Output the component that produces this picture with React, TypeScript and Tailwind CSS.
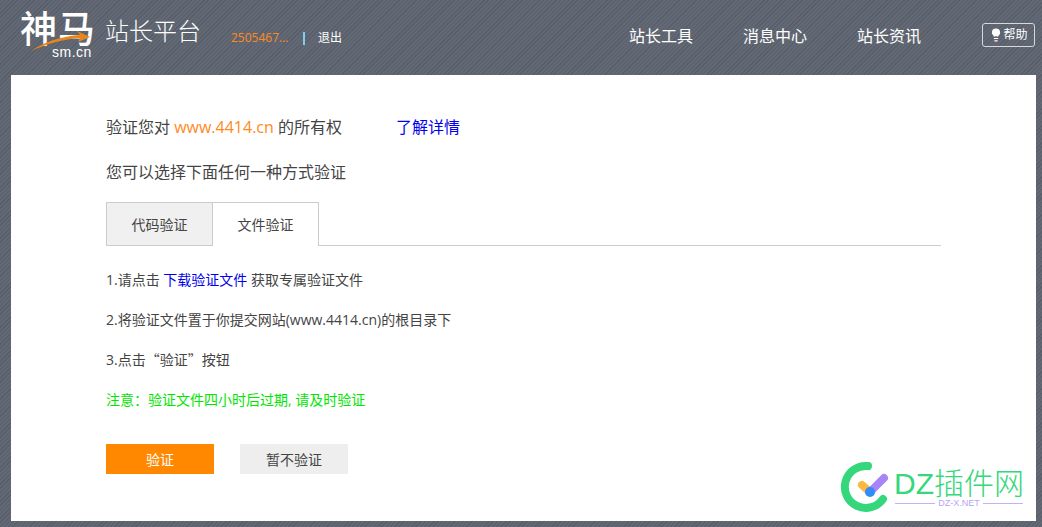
import React from "react";
import { Lightbulb } from "lucide-react";

const cjk = "font-['Open_Sans','Noto_Sans_CJK_SC',sans-serif]";

const Logo = () => (
  <div className="relative w-[85px] h-[62px] ml-[20px] shrink-0 text-white">
    <div className="absolute left-0 top-[9px] text-[37px] leading-[37px] tracking-[1px] font-medium font-['Noto_Sans_CJK_SC',sans-serif] whitespace-nowrap">
      神马
    </div>
    <svg className="absolute left-[10px] top-[28px]" width="62" height="26" viewBox="0 0 62 26">
      <path d="M1 23 C14 14 32 8 50 7 L47 3 L60 9 L48 14 L50 10 C34 11 16 16 1 23 Z" fill="#e8861c" />
    </svg>
    <div className="absolute left-[32px] top-[46px] text-[14px] leading-[12px] font-['Liberation_Sans',sans-serif] tracking-[0.5px]">
      sm.cn
    </div>
  </div>
);

const Watermark = () => (
  <div className="absolute left-[840px] top-[460px] w-[190px] h-[54px]">
    <svg className="absolute left-0 top-0" width="52" height="54" viewBox="0 0 52 54">
      <path d="M28 6 A21 21 0 1 0 43 39" fill="none" stroke="#34d77b" strokeWidth="8" strokeLinecap="round" />
      <path d="M22 25 L30 32" stroke="#fdb93f" strokeWidth="8" strokeLinecap="round" />
      <path d="M30 32 L44 18" stroke="#a585f8" strokeWidth="8" strokeLinecap="round" />
      <circle cx="30" cy="32" r="5" fill="#2e8df7" />
    </svg>
    <div className="absolute left-[54px] top-[6px] text-[30px] leading-[36px] text-[#34d77b] whitespace-nowrap font-['Liberation_Sans','Noto_Sans_CJK_SC',sans-serif] font-light">
      DZ插件网
    </div>
    <div className="absolute left-[55px] top-[37px] w-[128px] flex items-center gap-[3px] text-[9px] leading-[12px] text-[#b9a5f5] font-['Liberation_Sans',sans-serif]">
      <span className="flex-1 h-px bg-[#c3b2f5]" />
      <span>DZ-X.NET</span>
      <span className="flex-1 h-px bg-[#c3b2f5]" />
    </div>
  </div>
);

export default function App() {
  return (
    <div className={`relative w-[1042px] h-[527px] overflow-hidden ${cjk} bg-[repeating-linear-gradient(135deg,#585f6a_0px,#585f6a_1px,#626974_1px,#626974_3px)]`}>
      <header className="h-[75px] flex items-start">
        <Logo />
        <div className="mt-[16px] text-[24px] leading-[30px] font-light text-white whitespace-nowrap">站长平台</div>
        <div className="ml-[30px] mt-[31px] flex items-center text-[12px] leading-[14px]">
          <span className="text-[#ff8a1e] w-[59px] whitespace-nowrap">2505467...</span>
          <span className="ml-[13px] w-[2px] h-[13px] bg-[#7fcdf0]" />
          <span className="ml-[13px] text-white">退出</span>
        </div>
        <nav className="ml-auto mt-[26px] flex gap-[50px] text-[16px] leading-[20px] text-white">
          <span>站长工具</span>
          <span>消息中心</span>
          <span>站长资讯</span>
        </nav>
        <button className="ml-[61px] mr-[7px] mt-[23px] w-[53px] h-[24px] border border-[#d5d8dd] rounded-[3px] flex items-center justify-center text-[12px] text-white">
          <Lightbulb size={14} fill="white" strokeWidth={2} />
          <span>帮助</span>
        </button>
      </header>

      <main className="ml-[11px] w-[1025px] h-[446px] bg-white pl-[95px] pr-[95px] text-[#444]">
        <div className="pt-[42px] h-[65px] text-[16px] leading-[20px] whitespace-nowrap flex">
          <span>
            验证您对 <span className="text-[#ff8a1e]">www.4414.cn</span> 的所有权
          </span>
          <a className="ml-[54px] text-[#0000ee]">了解详情</a>
        </div>
        <p className="mt-[22px] text-[16px] leading-[20px]">您可以选择下面任何一种方式验证</p>

        <div className="mt-[20px] flex border-b border-[#ccc] h-[44px] text-[14px]">
          <div className="w-[107px] h-[44px] bg-[#f0f0f0] border border-[#ccc] flex items-center justify-center">代码验证</div>
          <div className="w-[106px] h-[44px] bg-white border border-l-0 border-b-0 border-[#ccc] flex items-center justify-center">文件验证</div>
        </div>

        <ul className="mt-[14px] text-[14px] leading-[40px]">
          <li className="h-[40px]">1.请点击 <a className="text-[#0000ee]">下载验证文件</a> 获取专属验证文件</li>
          <li className="h-[40px]">2.将验证文件置于你提交网站(www.4414.cn)的根目录下</li>
          <li className="h-[40px]">3.点击<span className="leading-[20px] font-['Noto_Sans_CJK_SC',sans-serif]">“验证”</span>按钮</li>
          <li className="h-[40px] text-[#00e600]">注意：验证文件四小时后过期, 请及时验证</li>
        </ul>

        <div className="mt-[24px] flex gap-[26px] text-[14px]">
          <button className="w-[108px] h-[30px] bg-[#ff8800] text-white">验证</button>
          <button className="w-[108px] h-[30px] bg-[#eeeeee]">暂不验证</button>
        </div>
      </main>
      <Watermark />
    </div>
  );
}
